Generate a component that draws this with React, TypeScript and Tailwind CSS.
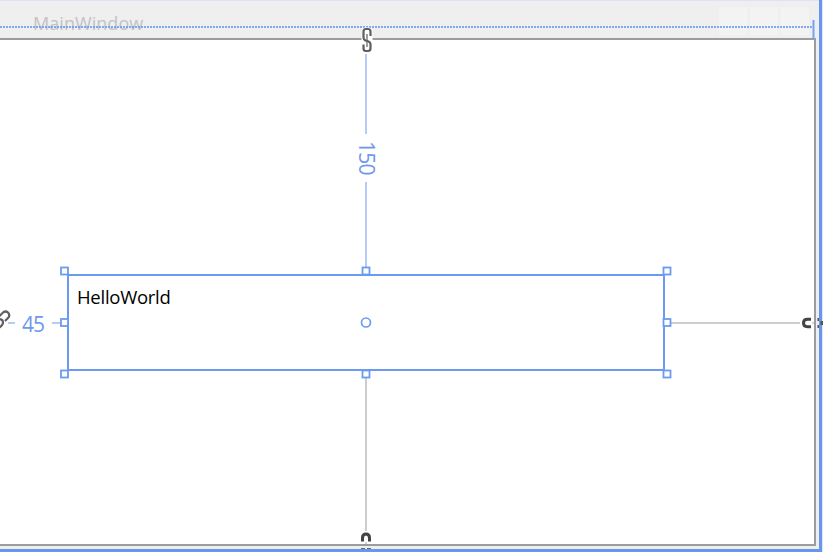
const TEXT = 'font-["Open_Sans","Noto_Sans",sans-serif] whitespace-nowrap leading-none';

function Handle({ x, y }: { x: number; y: number }) {
  return <rect x={x - 3.5} y={y - 3.5} width="7" height="7" fill="#fff" stroke="#6a9bf0" strokeWidth="1.8" />;
}

function TitleBar() {
  return (
    <header className="flex h-[38px] w-full shrink-0 items-start justify-between border-t border-[#dce4f2] bg-[#efefef] pl-[33px] pr-[10px]">
      <span className={`${TEXT} mt-[13px] text-[18px] tracking-[0.05px] text-[#c2c2c5]`}>MainWindow</span>
      <div className="mt-[6px] flex gap-[3px]">
        <i className="size-7 bg-[#f3f3f3]" />
        <i className="size-7 bg-[#f3f3f3]" />
        <i className="size-7 bg-[#f3f3f3]" />
      </div>
    </header>
  );
}

function ChainLink() {
  return (
    <>
      <rect x="361.500" y="27.500" width="11" height="26" rx="4" fill="#fff" />
      <path
        d="M370.500 36V31.500Q370.500 29 368 29H366Q363.500 29 363.500 31.500V37.500Q363.500 39.500 365.500 40.500L368.500 41.500Q370.500 42.500 370.500 44V48.500Q370.500 51 368 51H366Q363.500 51 363.500 48.500V44.500"
        stroke="#5e5e5e"
        strokeWidth="2.200"
      />
      <path d="M367 34V40M367 42V47" stroke="#888" strokeWidth="1.600" />
    </>
  );
}

function Adorners() {
  return (
    <svg className="pointer-events-none absolute inset-0" width="823" height="552" fill="none">
      <path d="M0 27H812" stroke="#6a9bf0" strokeWidth="2" strokeDasharray="2 1" opacity=".85" />
      <path d="M813.500 20V39" stroke="#75a2f0" strokeWidth="2" />
      <path d="M366 54V134M366 182V267M8 323H15M52 323H62" stroke="#b4ccf7" strokeWidth="2" />
      <path d="M366 378V531M671 323H800" stroke="#cdcdcd" strokeWidth="2" />
      <rect x="68" y="275" width="596" height="95" stroke="#6a9bf0" strokeWidth="2" />
      <Handle x={64.500} y={271} />
      <Handle x={366} y={271} />
      <Handle x={667} y={271} />
      <Handle x={64.500} y={322.500} />
      <Handle x={667} y={322.500} />
      <Handle x={64.500} y={374} />
      <Handle x={366} y={374} />
      <Handle x={667} y={374} />
      <circle cx="366" cy="322.500" r="4.500" fill="#fff" stroke="#6a9bf0" strokeWidth="1.700" />
      <ChainLink />
      <path d="M-1 316.500L3 312.500Q5.500 310.500 8 312.500Q10.500 315.500 8 318L5 321M-1 319Q3 319 3 322.500Q3 325 -1 328" stroke="#606060" strokeWidth="2.200" />
      <path d="M800 323H814" stroke="#fff" strokeWidth="12" />
      <path d="M812 323H814" stroke="#d5d5d5" strokeWidth="2" />
      <path d="M811 319.300H807.500Q803.500 319.300 803.500 323T807.500 326.700H811" stroke="#444" strokeWidth="3" />
      <path d="M817.500 319.500H819M817.500 326.500H819M822 321V325" stroke="#555" strokeWidth="3" />
      <path d="M366 531V544" stroke="#fff" strokeWidth="12" />
      <path d="M366 542V544" stroke="#d5d5d5" strokeWidth="2" />
      <path d="M362.500 541.500V538Q362.500 534 366 534T369.500 538V541.500" stroke="#444" strokeWidth="3" />
      <path d="M361 548.500h4M367 548.500h4" stroke="#666" />
    </svg>
  );
}

export default function App() {
  return (
    <div className="relative flex h-[552px] w-[823px] flex-col overflow-hidden bg-[#dce7fb]">
      <div className="flex h-[552px] w-[822px] flex-col border-b-[3px] border-r-[3px] border-[#6797ea] bg-[#eeeeee]">
        <TitleBar />
        <main className="h-[508px] w-[816px] shrink-0 border-b-2 border-r-2 border-t-2 border-[#9c9c9c] bg-white pl-[77px] pt-[248px]">
          <p className={`${TEXT} text-[18.500px] tracking-[-0.27px] text-black`}>HelloWorld</p>
        </main>
      </div>
      <Adorners />
      <span className={`${TEXT} absolute left-[22px] top-[314px] text-[21px] tracking-[-0.900px] text-[#6f97ec]`}>45</span>
      <span className={`${TEXT} absolute left-[356px] top-[141px] text-[21px] tracking-[-0.700px] text-[#6f97ec] [writing-mode:vertical-rl]`}>150</span>
    </div>
  );
}
